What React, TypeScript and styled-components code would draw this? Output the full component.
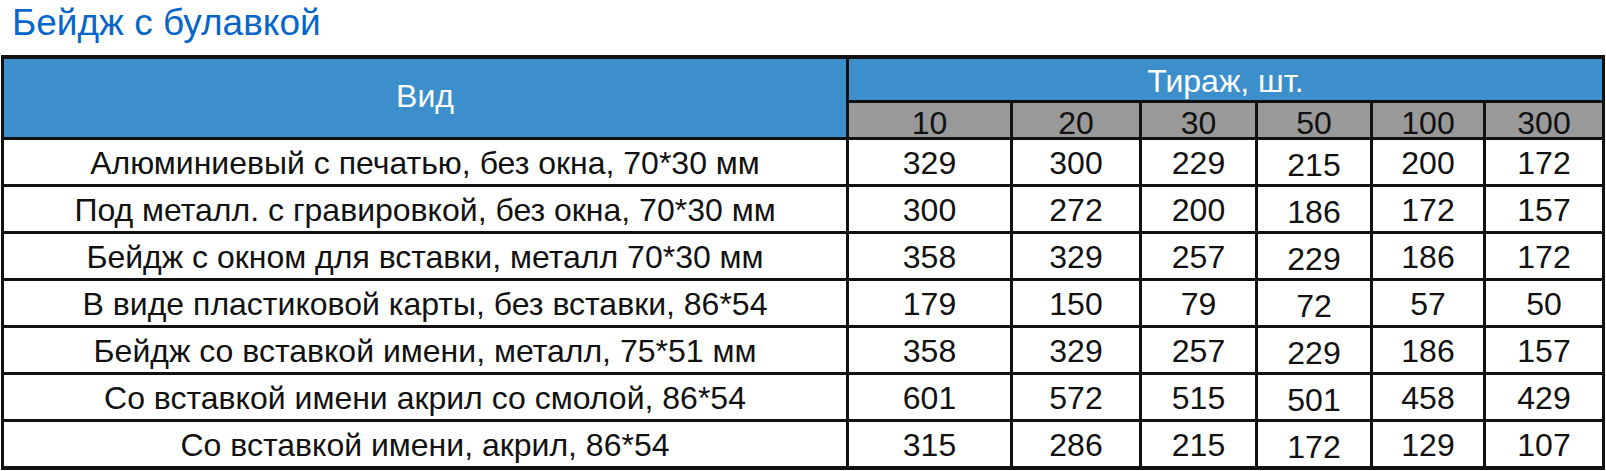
import { Fragment } from "react";
import styled, { createGlobalStyle } from "styled-components";

const GlobalStyle = createGlobalStyle`
  html, body {
    margin: 0;
    padding: 0;
    background: #fff;
  }

  body {
    font-family: "Liberation Sans", Arial, sans-serif;
  }
`;

const Page = styled.div`
  width: 1606px;
  padding-top: 2px;
`;

const Title = styled.h2`
  margin: 0 0 12px 12px;
  height: 41px;
  font-size: 37px;
  line-height: 41px;
  font-weight: normal;
  color: #0866c9;
`;

const Table = styled.div`
  display: grid;
  grid-template-columns: 842px 161px 126px 113px 112px 110px 116px;
  grid-template-rows: 41px 34px repeat(7, 44px);
  gap: 3px;
  width: max-content;
  margin-left: 1px;
  padding: 4px 3px;
  background: #111;
`;

const Cell = styled.div<{ $bg?: string; $color?: string }>`
  display: flex;
  align-items: center;
  justify-content: center;
  background: ${(p) => p.$bg || "#fff"};
  color: ${(p) => p.$color || "#111"};
  font-size: 32px;
  line-height: 1;
  white-space: nowrap;
`;

const KindHead = styled(Cell)`
  grid-row: 1 / span 2;
  grid-column: 1;
  padding-bottom: 4px;
`;

const RunHead = styled(Cell)`
  grid-row: 1;
  grid-column: 2 / span 6;
  padding-top: 2px;
`;

const Qty = styled(Cell)`
  padding-top: 5px;
`;

const Value = styled(Cell)<{ $low?: boolean }>`
  padding-top: ${(p) => (p.$low ? "6px" : "2px")};
`;

const BLUE = "#3c8fca";
const GRAY = "#999999";

const runs = [10, 20, 30, 50, 100, 300];

const rows: [string, number[]][] = [
  ["Алюминиевый с печатью, без окна, 70*30 мм", [329, 300, 229, 215, 200, 172]],
  ["Под металл. с гравировкой, без окна, 70*30 мм", [300, 272, 200, 186, 172, 157]],
  ["Бейдж с окном для вставки, металл 70*30 мм", [358, 329, 257, 229, 186, 172]],
  ["В виде пластиковой карты, без вставки, 86*54", [179, 150, 79, 72, 57, 50]],
  ["Бейдж со вставкой имени, металл, 75*51 мм", [358, 329, 257, 229, 186, 157]],
  ["Со вставкой имени акрил со смолой, 86*54", [601, 572, 515, 501, 458, 429]],
  ["Со вставкой имени, акрил, 86*54", [315, 286, 215, 172, 129, 107]],
];

export default function App() {
  return (
    <Page>
      <GlobalStyle />
      <Title>Бейдж с булавкой</Title>
      <Table>
        <KindHead $bg={BLUE} $color="#fff">Вид</KindHead>
        <RunHead $bg={BLUE} $color="#fff">Тираж, шт.</RunHead>
        {runs.map((r) => (
          <Qty key={r} $bg={GRAY}>{r}</Qty>
        ))}
        {rows.map(([name, prices]) => (
          <Fragment key={name}>
            <Value>{name}</Value>
            {prices.map((p, i) => (
              // the "50" column sits a little lower in the source sheet
              <Value key={i} $low={i === 3}>{p}</Value>
            ))}
          </Fragment>
        ))}
      </Table>
    </Page>
  );
}
